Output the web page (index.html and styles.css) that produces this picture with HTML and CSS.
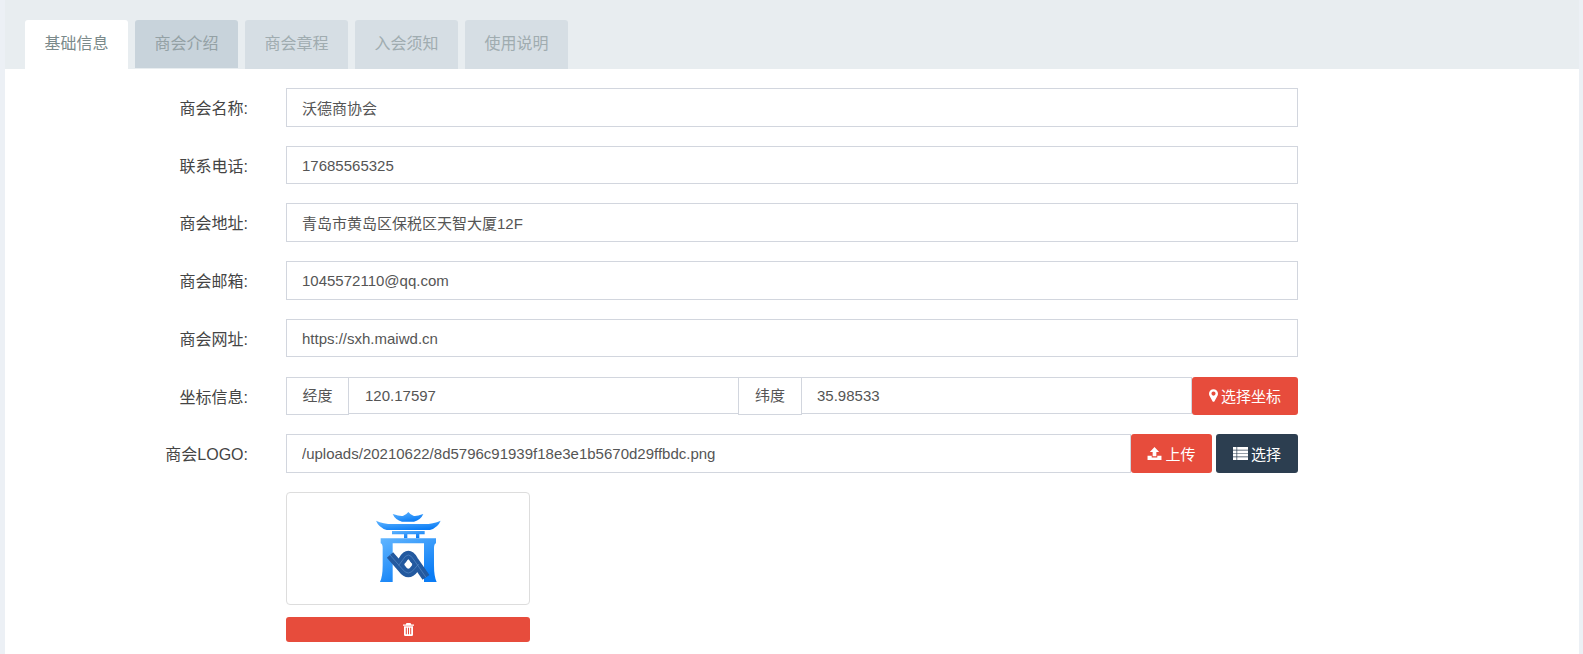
FILE: index.html
```html
<!DOCTYPE html>
<html lang="zh-CN">
<head>
<meta charset="utf-8">
<title>商会信息</title>
<link rel="stylesheet" href="styles.css">
</head>
<body>
<div class="panel">
  <nav class="tabs">
    <a class="tab active">基础信息</a>
    <a class="tab hover">商会介绍</a>
    <a class="tab">商会章程</a>
    <a class="tab">入会须知</a>
    <a class="tab">使用说明</a>
  </nav>
  <form class="form">
    <div class="row"><label class="label">商会名称:</label><div class="control"><input class="input" value="沃德商协会"></div></div>
    <div class="row"><label class="label">联系电话:</label><div class="control"><input class="input" value="17685565325"></div></div>
    <div class="row"><label class="label">商会地址:</label><div class="control"><input class="input" value="青岛市黄岛区保税区天智大厦12F"></div></div>
    <div class="row"><label class="label">商会邮箱:</label><div class="control"><input class="input" value="1045572110@qq.com"></div></div>
    <div class="row"><label class="label">商会网址:</label><div class="control"><input class="input" value="https://sxh.maiwd.cn"></div></div>
    <div class="row"><label class="label">坐标信息:</label>
      <div class="control">
        <span class="addon">经度</span><input class="input coord lng" value="120.17597">
        <span class="addon next">纬度</span><input class="input coord" value="35.98533">
        <button type="button" class="btn red btn-map">
          <svg class="icon" viewBox="0 0 10 14"><path fill="currentColor" fill-rule="evenodd" d="M5 0a5 5 0 0 0-5 5c0 1.100.35 1.800.55 2.200L3.900 13.300a1.200 1.200 0 0 0 2.200 0l3.350-6.100C9.650 6.800 10 6.100 10 5a5 5 0 0 0-5-5zm0 7.200a2.300 2.300 0 1 1 0-4.600 2.300 2.300 0 0 1 0 4.600z"/></svg>
          选择坐标</button>
      </div>
    </div>
    <div class="row"><label class="label">商会LOGO:</label>
      <div class="control">
        <input class="input" value="/uploads/20210622/8d5796c91939f18e3e1b5670d29ffbdc.png">
        <button type="button" class="btn red btn-up">
          <svg class="icon wide" viewBox="0 0 15 14"><path fill="currentColor" d="M7.500 0 12.500 5.500H9.500V10H5.500V5.500H2.500zM0 9.500h4.500v1.800h6V9.500H15V14H0z"/></svg>
          上传</button>
        <button type="button" class="btn dark btn-sel">
          <svg class="icon wide" viewBox="0 0 15 13"><path fill="currentColor" d="M0 0h3.500v2.800H0zM4.200 0H15v2.800H4.200zM0 3.400h3.500v2.800H0zM4.200 3.400H15v2.800H4.200zM0 6.800h3.500v2.800H0zM4.200 6.800H15v2.800H4.200zM0 10.200h3.500V13H0zM4.200 10.200H15V13H4.200z"/></svg>
          选择</button>
      </div>
    </div>
    <div class="logo-row">
      <div class="thumb">
        <svg class="logo" viewBox="0 0 270 270">
          <defs>
            <linearGradient id="lg" x1="0" y1="0" x2="0.6" y2="1">
              <stop offset="0" stop-color="#62b6ff"/>
              <stop offset="1" stop-color="#0a7cf5"/>
            </linearGradient>
          </defs>
          <path fill="url(#lg)" d="M98 42q25 8 32 5q8-2 15-11q7 9 15 11q7 3 30-5q-8 18-28 23h-36q-20-5-28-23z"/>
          <path fill="url(#lg)" d="M48 62q22 10 50 10h94q28 0 50-10q-8 20-32 28H80q-24-8-32-28z"/>
          <path fill="url(#lg)" d="M96 93h98v10h-16v12h-10v-12h-26v12h-10v-12H96z"/>
          <path fill="url(#lg)" d="M62 115H228V130Q222 132 222 144V196Q222 230 230 246H192Q192 200 192 130H98Q98 200 98 246H60Q68 230 68 196V144Q68 132 62 130Z"/>
          <g fill="none" stroke="#23599f" stroke-width="25">
            <path d="M90 165L126 206Q145 232 164 206L176 192"/>
            <path d="M198 232L162 180Q145 150 128 180L116 196"/>
          </g>
          <g fill="none" stroke="#6d9ad0" stroke-width="1.500">
            <path d="M90 165L126 206Q145 232 164 206L176 192"/>
            <path d="M198 232L162 180Q145 150 128 180L116 196"/>
          </g>
          <path fill="#fff" d="M145 180l12 12-12 12-12-12z"/>
        </svg>
      </div>
      <button type="button" class="btn red btn-del" aria-label="删除">
        <svg class="icon trash" viewBox="0 0 11 13"><path fill="currentColor" fill-rule="evenodd" d="M3.500 0h4l.8 1.600H11v1.200H0V1.600h2.700zM1 3.300h9v8.500A1.200 1.200 0 0 1 8.800 13H2.200A1.200 1.200 0 0 1 1 11.800zm1.800 1.500v6.500h1V4.800zm2.200 0v6.500h1V4.800zm2.200 0v6.500h1V4.800z"/></svg>
      </button>
    </div>
  </form>
</div>
</body>
</html>
```
FILE: styles.css
```css
* { box-sizing: border-box; }
html, body { margin: 0; height: 654px; overflow: hidden; }
body {
  background: #ecf0f5;
  font-family: "Liberation Sans", "Noto Sans CJK SC", sans-serif;
  font-size: 15px;
  color: #333;
  padding: 0 4px 0 5px;
}
.panel { background: #fff; height: 654px; }
.tabs {
  display: flex;
  gap: 7px;
  height: 69px;
  padding: 20px 0 0 20px;
  background: #e8edf0;
}
.tab {
  width: 103px;
  height: 49px;
  line-height: 47px;
  text-align: center;
  font-size: 16px;
  color: #a0acb0;
  background: #d6dee4;
  border-radius: 3px 3px 0 0;
}
.tab.active { background: #fff; color: #7b8a8b; }
.tab.hover { background: #c8d3db; color: #94a1a5; height: 48px; }
.form { padding-top: 19px; }
.row { display: flex; align-items: flex-start; height: 38.6px; margin-bottom: 19.12px; }
.label { width: 243px; line-height: 42px; text-align: right; font-size: 16px; color: #444; }
.control { display: flex; margin-left: 38px; width: 1012px; height: 38.6px; }
.input {
  flex: 1 1 0;
  min-width: 0;
  height: 38.6px;
  padding: 0 15px;
  border: 1px solid #d2d6de;
  background: #fff;
  font: inherit;
  color: #555;
  outline: none;
}
.coord { height: 37.6px; margin-left: -1px; }
.lng { flex: none; width: 391px; padding-left: 16px; }
.addon {
  flex: none;
  width: 63px;
  height: 38.6px;
  line-height: 36px;
  text-align: center;
  border: 1px solid #d2d6de;
  color: #555;
  background: #fff;
}
.addon.next { margin-left: -1px; width: 64px; }
.btn {
  flex: none;
  height: 38.6px;
  border: 0;
  border-radius: 3px;
  color: #fff;
  font: inherit;
  padding: 0;
  display: inline-flex;
  align-items: center;
  justify-content: center;
  gap: 3px;
}
.red { background: #e74c3c; }
.dark { background: #2c3e50; }
.btn-map { width: 106px; }
.btn-up { width: 81px; }
.btn-sel { width: 82px; margin-left: 4px; }
.icon { width: 9px; height: 13px; }
.icon.wide { width: 15px; height: 13px; }
.logo-row { margin-left: 281px; width: 244px; padding-top: 0.5px; }
.thumb {
  height: 112.7px;
  border: 1px solid #ddd;
  border-radius: 4px;
  display: flex;
  align-items: center;
  justify-content: center;
  padding: 0 6px 7px 0;
}
.logo { width: 90px; height: 90px; }
.btn-del { width: 244px; height: 25px; margin-top: 12px; display: flex; }
.icon.trash { width: 11px; height: 13px; }
```
